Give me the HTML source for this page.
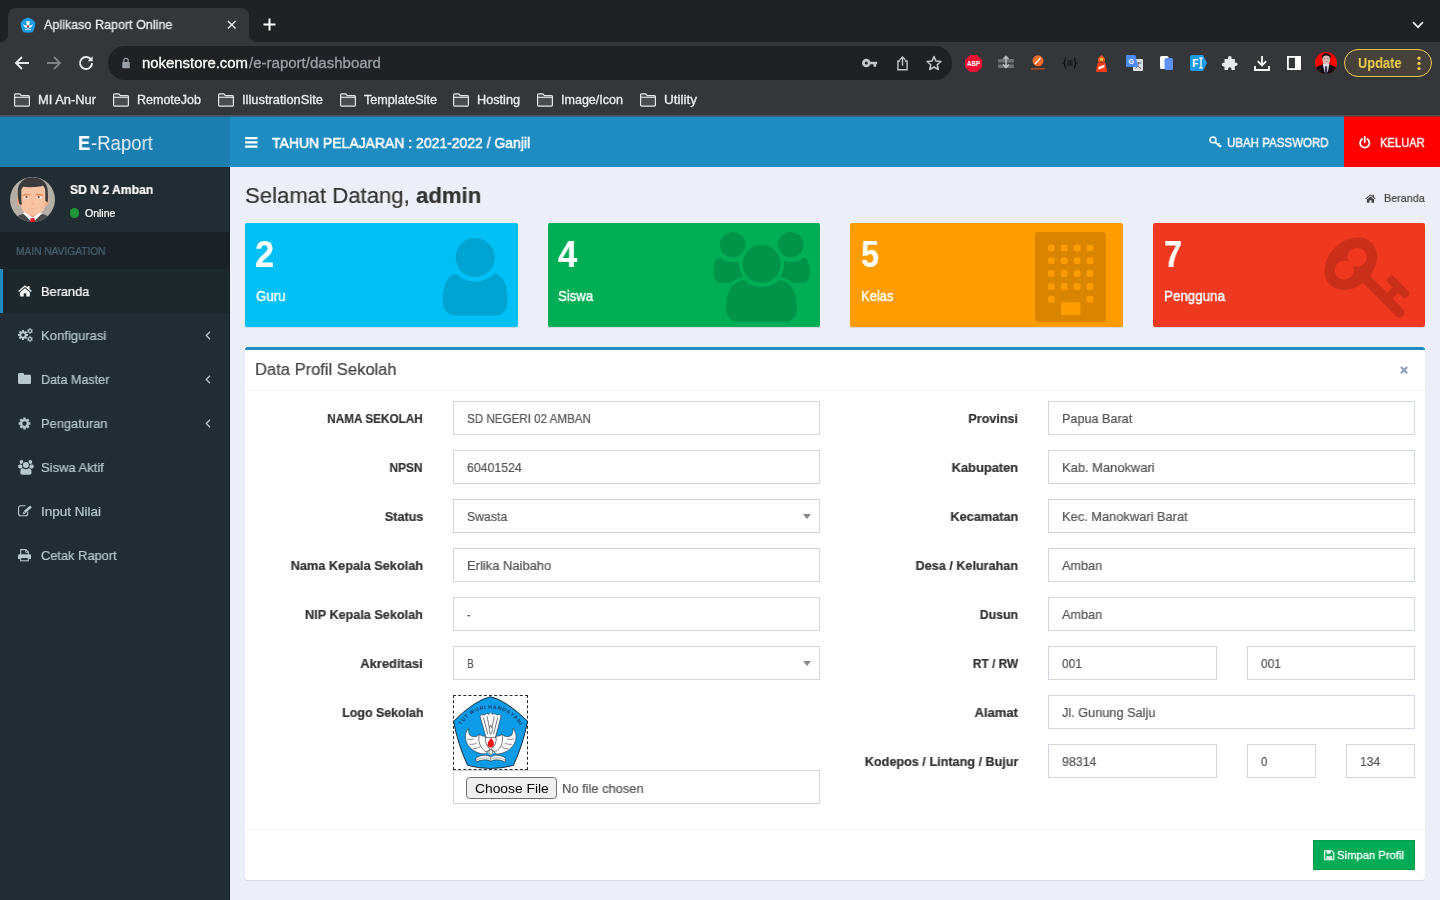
<!DOCTYPE html>
<html lang="id">
<head>
<meta charset="utf-8">
<title>Aplikaso Raport Online</title>
<style>
*{box-sizing:border-box;margin:0;padding:0}
html,body{width:1440px;height:900px;overflow:hidden;background:#eceff7;font-family:"Liberation Sans",sans-serif;}
body{position:relative}
.abs{position:absolute}
.t{position:absolute;white-space:nowrap;display:inline-block;will-change:transform}
svg{position:absolute;overflow:visible}
/* browser chrome */
#chrome{position:absolute;left:0;top:0;width:1440px;height:116px;background:#35363a}
#tabstrip{position:absolute;left:0;top:0;width:1440px;height:42px;background:#202124}
#tab{position:absolute;left:8px;top:8px;width:241px;height:34px;background:#35363a;border-radius:8px 8px 0 0}
#tab:before,#tab:after{content:"";position:absolute;bottom:0;width:8px;height:8px;background:radial-gradient(circle at 0 0,transparent 8px,#35363a 8.5px)}
#tab:before{left:-8px}
#tab:after{right:-8px;background:radial-gradient(circle at 100% 0,transparent 8px,#35363a 8.5px)}
#omni{position:absolute;left:108px;top:46.300px;width:844px;height:33.400px;border-radius:16.700px;background:#202124}
#update{position:absolute;left:1344px;top:49px;width:88px;height:28px;border-radius:14px;border:1px solid #f0cc4c;background:#46423a}
/* app */
#logo{position:absolute;left:0;top:116px;width:230px;height:51px;background:#1b7eb0}
#navbar{position:absolute;left:230px;top:116px;width:1210px;height:51px;background:#1e8cc1}
#keluar{position:absolute;left:1344px;top:116px;width:96px;height:51px;background:#ff0000}
#sidebar{position:absolute;left:0;top:167px;width:230px;height:733px;background:#212d33}
#navhead{position:absolute;left:0;top:65px;width:230px;height:37px;background:#1a2227}
#active{position:absolute;left:0;top:102px;width:230px;height:44px;background:#1d282d;border-left:3px solid #1e8cc1}
.sbox{position:absolute;top:223px;width:273px;height:104px;border-radius:2px;box-shadow:0 1px 1px rgba(0,0,0,.1);overflow:hidden}
#box{position:absolute;left:245px;top:347px;width:1180px;height:533px;background:#fff;border-top:3px solid #1e8cc1;border-radius:3px;box-shadow:0 1px 1px rgba(0,0,0,.1)}
.hr{position:absolute;left:0;width:1180px;height:1px;background:#f4f4f4}
.in{position:absolute;height:34px;border:1px solid #d2d6e0;background:#fff}
.caret{position:absolute;width:0;height:0;border-left:4px solid transparent;border-right:4px solid transparent;border-top:5px solid #888}
#save{position:absolute;left:1068px;top:490px;width:102px;height:30px;background:#00ab55;border:1px solid #009a4b;border-radius:0}
#choose{position:absolute;left:12px;top:5.500px;width:91px;height:22px;border:1px solid #6f6f6f;border-radius:3.5px;background:#efefef}
</style>
</head>
<body>

<div id="chrome">
<div id="tabstrip"><div id="tab"></div></div>
<svg style="left:20px;top:17px" width="16" height="16" viewBox="0 0 16 16"><path d="M8 0.6 C10.8 1.2 13.6 3.2 15.5 6 C15.2 9.4 14.2 12.6 12.6 15.2 C9.6 15.8 6.4 15.8 3.4 15.2 C1.8 12.6 .8 9.4 .5 6 C2.4 3.2 5.2 1.2 8 .6Z" fill="#1d9be6"/><path d="M6.2 4.2h3.6l-.8 4.2h-2z" fill="#fff"/><path d="M3.2 7.2c.4 2 1.8 3.4 4 3.6l.8-1.6.8 1.6c2.2-.2 3.6-1.6 4-3.6-1 1-2.2 1.4-3.2 1.2H6.4C5.400 8.6 4.200 8.200 3.200 7.200Z" fill="#fff"/><ellipse cx="8" cy="9.3" rx=".9" ry="1.2" fill="#e8202a"/><path d="M5 12.200l3-.8 3 .8v.9l-3-.7-3 .7z" fill="#fff"/></svg>
<span class="t" style="top:15.20px;font-size:12.8px;line-height:19px;color:#e8eaed;left:44.30px;transform-origin:0 50%;transform:scaleX(0.9806);-webkit-text-stroke:0.3px #e8eaed;">Aplikaso Raport Online</span>
<svg style="left:227px;top:20px" width="9.500" height="9.500" viewBox="0 0 10 10"><path d="M1 1l8 8M9 1l-8 8" stroke="#e8eaed" stroke-width="1.5" fill="none"/></svg>
<svg style="left:263px;top:18px" width="13" height="13" viewBox="0 0 13 13"><path d="M6.500 .5v12M.5 6.500h12" stroke="#fff" stroke-width="2" fill="none"/></svg>
<svg style="left:1412px;top:21px" width="12" height="8" viewBox="0 0 12 8"><path d="M1 1.200l5 5 5-5" stroke="#e8eaed" stroke-width="1.700" fill="none"/></svg>
<svg style="left:14px;top:55px" width="16" height="16" viewBox="0 0 16 16"><path d="M15 8H2.500M8 2L2 8l6 6" stroke="#e8eaed" stroke-width="1.900" fill="none"/></svg>
<svg style="left:46px;top:55px" width="16" height="16" viewBox="0 0 16 16"><path d="M1 8h12.500M8 2l6 6-6 6" stroke="#7e8084" stroke-width="1.900" fill="none"/></svg>
<svg style="left:78px;top:55px" width="16" height="16" viewBox="0 0 16 16"><path d="M13.300 5.200A6 6 0 1 0 14 8" stroke="#e8eaed" stroke-width="1.900" fill="none"/><path d="M14.600 1.200v5h-5z" fill="#e8eaed"/></svg>
<div id="omni"></div>
<svg style="left:121px;top:57px" width="10" height="11.700" viewBox="0 0 12 14"><rect x="1.500" y="6" width="9" height="7.500" rx="1" fill="#9aa0a6"/><path d="M3.500 6V4a2.500 2.500 0 0 1 5 0v2" stroke="#9aa0a6" stroke-width="1.500" fill="none"/></svg>
<span class="t" style="top:53.00px;font-size:14px;line-height:20px;color:#ffffff;left:142.30px;transform-origin:0 50%;transform:scaleX(1.0642);-webkit-text-stroke:0.3px #fff;">nokenstore.com</span>
<span class="t" style="top:53.00px;font-size:14px;line-height:20px;color:#9aa0a6;left:249.00px;transform-origin:0 50%;transform:scaleX(1.0733);-webkit-text-stroke:0.3px #9aa0a6;">/e-raport/dashboard</span>
<svg style="left:862px;top:57px" width="16" height="12" viewBox="0 0 16 12"><circle cx="4.300" cy="6" r="2.900" stroke="#c4c7cb" stroke-width="2.800" fill="none"/><path d="M7.500 6h7.700M12.800 6v3.800" stroke="#c4c7cb" stroke-width="2.600" fill="none"/></svg>
<svg style="left:896.500px;top:55.500px" width="11" height="14.700" viewBox="0 0 12 16"><path d="M3.500 5.500H1v9.500h10V5.500H8.500" stroke="#c4c7cb" stroke-width="1.500" fill="none"/><path d="M6 10.500V1.500M3 4l3-3 3 3" stroke="#c4c7cb" stroke-width="1.500" fill="none"/></svg>
<svg style="left:926px;top:55px" width="16" height="15" viewBox="0 0 16 15"><path d="M8 1.500l2 4.600 4.900.4-3.700 3.200 1.100 4.800L8 12l-4.300 2.500 1.100-4.800L1.100 6.500l4.900-.4z" stroke="#c4c7cb" stroke-width="1.500" fill="none" stroke-linejoin="round"/></svg>
<svg style="left:965px;top:54.5px" width="17" height="17" viewBox="0 0 17 17"><path d="M5 0h7l5 5v7l-5 5H5l-5-5V5z" fill="#f40d32"/><text x="8.500" y="11.300" font-family="Liberation Sans" font-weight="bold" font-size="7.800" fill="#fff" text-anchor="middle" textLength="13" lengthAdjust="spacingAndGlyphs">ABP</text></svg>
<svg style="left:998px;top:56px" width="16" height="14" viewBox="0 0 16 14"><rect x="0" y="3" width="16" height="9" rx="1" fill="#6e6f73"/><rect x="0" y="6.500" width="16" height="2" fill="#3c3d41"/><path d="M8 0v11M5 8.500l3 3 3-3M5.500 3L8 .5 10.500 3" stroke="#b9babd" stroke-width="1.600" fill="none"/></svg>
<svg style="left:1031px;top:55px" width="14" height="16" viewBox="0 0 14 16"><circle cx="7" cy="5.800" r="5.500" fill="#f26b2a"/><path d="M4 9l5.500-6" stroke="#fff" stroke-width="1.300"/><rect x="0" y="13" width="14" height="1.600" fill="#a84a22"/></svg>
<svg style="left:1063px;top:57px" width="14" height="12" viewBox="0 0 14 12"><path d="M3 1C1.500 1 2.500 5.500 .8 6 2.500 6.500 1.500 11 3 11M11 1c1.500 0 .5 4.500 2.200 5-1.700.5-.7 5-2.200 5" stroke="#0c0c0e" stroke-width="1.300" fill="none"/><path d="M4.500 4h5M4.500 6h5M4.500 8h5" stroke="#0c0c0e" stroke-width="1.100"/></svg>
<svg style="left:1095px;top:54.500px" width="13" height="17" viewBox="0 0 13 17"><path d="M6.500 0l3.500 3.500v3.200H3V3.500z" fill="#ff5a1f"/><circle cx="6.500" cy="4.200" r="1.500" fill="#ffd54a"/><path d="M2.800 7.500h7.400l2 9.500H.8z" fill="#ff3d14"/><path d="M3.500 12l6-2.200v2.400l-6 2.200z" fill="#fff"/></svg>
<svg style="left:1125.500px;top:55px" width="17" height="16" viewBox="0 0 17 16"><rect x="7" y="4" width="10" height="12" rx="1" fill="#dcdfe3"/><path d="M9.500 8h6M12.500 7v1c0 2-1.500 4.500-3 5.500M11 9.500c.8 1.800 2.500 3.300 4 4" stroke="#5f6368" stroke-width="1" fill="none"/><path d="M1 0h8.500l2.500 12H1a1 1 0 0 1-1-1V1a1 1 0 0 1 1-1z" fill="#4c8bf5"/><text x="5.200" y="8.700" font-family="Liberation Sans" font-weight="bold" font-size="7" fill="#fff" text-anchor="middle">G</text></svg>
<svg style="left:1159.500px;top:56px" width="13" height="14" viewBox="0 0 13 14"><rect x="0" y="0" width="8.500" height="13" rx="1.500" fill="#fff"/><rect x="4.500" y="2" width="8.500" height="12" rx="1.500" fill="#5b94f5"/></svg>
<svg style="left:1189.500px;top:55px" width="17" height="16" viewBox="0 0 17 16"><path d="M2 0h11l4 8-4 8H2a2 2 0 0 1-2-2V2a2 2 0 0 1 2-2z" fill="#1f9bea"/><text x="5.400" y="12" font-family="Liberation Sans" font-weight="bold" font-size="10" fill="#fff" text-anchor="middle">F</text><path d="M9.300 3.200h3.400M9.300 12.800h3.400M11 3.200v9.600" stroke="#fff" stroke-width="1.300"/></svg>
<svg style="left:1222px;top:55.500px" width="16" height="15" viewBox="0 0 16 15"><path d="M6 1.800a1.800 1.800 0 0 1 3.600 0V3h3.200v3.400h1a1.800 1.800 0 0 1 0 3.600h-1V14H9.500v-1a1.700 1.700 0 0 0-3.400 0v1H2.500v-3.600h-1a1.800 1.800 0 0 1 0-3.600h1V3H6z" fill="#e8eaed"/></svg>
<svg style="left:1254px;top:55px" width="16" height="16" viewBox="0 0 16 16"><path d="M8 1v9M3.800 6.200L8 10.400l4.200-4.200M1 11v4h14v-4" stroke="#fff" stroke-width="1.800" fill="none"/></svg>
<svg style="left:1287px;top:56px" width="14" height="14" viewBox="0 0 14 14"><rect x=".9" y=".9" width="12.200" height="12.200" stroke="#fff" stroke-width="1.800" fill="none"/><rect x="8" y="1" width="5.500" height="12" fill="#fff"/></svg>
<svg style="left:1315px;top:52px;border-radius:50%;overflow:hidden" width="22" height="22" viewBox="0 0 22 22"><g><rect width="22" height="22" fill="#fb0202"/><path d="M0 22V16.500C2 14.500 5 13.500 8 12.300h6.300c3 1.200 6 2.200 7.700 4.200V22z" fill="#0d0d12"/><path d="M7.800 12l1.200-1h4.300l1.100 1-1.500 8h-3.500z" fill="#d9d9e6"/><path d="M10.100 14.200h1.900l.5 7.800h-3z" fill="#3a3450"/><rect x="7.500" y="2.500" width="7.500" height="9.500" rx="3.400" fill="#d9bbb4"/><path d="M6.900 6.300C6.500 2.800 8.500 1.200 11.300 1.200s4.900 1.600 4.500 5.100l-.8-.3c-.2-1.600-1.300-2.600-3.700-2.600s-3.400 1-3.600 2.600z" fill="#15100f"/><path d="M9.200 9.600h3.800" stroke="#b98c88" stroke-width=".7"/><path d="M8.600 6.600h1.500M12.200 6.600h1.500" stroke="#6b5a66" stroke-width=".8"/></g></svg>
<div id="update"></div>
<span class="t" style="top:53.00px;font-size:14.2px;line-height:20px;color:#f3cf4e;font-weight:bold;left:1357.50px;transform-origin:0 50%;transform:scaleX(0.9037);">Update</span>
<svg style="left:1416.500px;top:56px" width="4" height="14" viewBox="0 0 4 14"><circle cx="2" cy="2.200" r="1.600" fill="#f3cf4e"/><circle cx="2" cy="7.400" r="1.600" fill="#f3cf4e"/><circle cx="2" cy="12.500" r="1.600" fill="#f3cf4e"/></svg>
<svg style="left:14px;top:93px" width="16" height="14" viewBox="0 0 16 14"><path d="M1.500 .8h4.300l1.600 1.800h7.100a.9.900 0 0 1 .9.900v8.800a.9.900 0 0 1-.9.900H1.500a.9.900 0 0 1-.9-.9V1.700a.9.900 0 0 1 .9-.9z" fill="#4a4b4f" stroke="#e4e6e9" stroke-width="1.200"/><path d="M.8 4.300h14.400" stroke="#e4e6e9" stroke-width="1.100"/></svg>
<span class="t" style="top:91.00px;font-size:12.4px;line-height:18px;color:#eceef0;left:38.00px;transform-origin:0 50%;transform:scaleX(1.0394);-webkit-text-stroke:0.3px #eceef0;">MI An-Nur</span>
<svg style="left:113px;top:93px" width="16" height="14" viewBox="0 0 16 14"><path d="M1.500 .8h4.300l1.600 1.800h7.100a.9.900 0 0 1 .9.900v8.800a.9.900 0 0 1-.9.900H1.500a.9.900 0 0 1-.9-.9V1.700a.9.900 0 0 1 .9-.9z" fill="#4a4b4f" stroke="#e4e6e9" stroke-width="1.200"/><path d="M.8 4.300h14.400" stroke="#e4e6e9" stroke-width="1.100"/></svg>
<span class="t" style="top:91.00px;font-size:12.4px;line-height:18px;color:#eceef0;left:137.00px;transform-origin:0 50%;transform:scaleX(1.0090);-webkit-text-stroke:0.3px #eceef0;">RemoteJob</span>
<svg style="left:218px;top:93px" width="16" height="14" viewBox="0 0 16 14"><path d="M1.500 .8h4.300l1.600 1.800h7.100a.9.900 0 0 1 .9.900v8.800a.9.900 0 0 1-.9.900H1.500a.9.900 0 0 1-.9-.9V1.700a.9.900 0 0 1 .9-.9z" fill="#4a4b4f" stroke="#e4e6e9" stroke-width="1.200"/><path d="M.8 4.300h14.400" stroke="#e4e6e9" stroke-width="1.100"/></svg>
<span class="t" style="top:91.00px;font-size:12.4px;line-height:18px;color:#eceef0;left:242.00px;transform-origin:0 50%;transform:scaleX(1.0402);-webkit-text-stroke:0.3px #eceef0;">IllustrationSite</span>
<svg style="left:340px;top:93px" width="16" height="14" viewBox="0 0 16 14"><path d="M1.500 .8h4.300l1.600 1.800h7.100a.9.900 0 0 1 .9.900v8.800a.9.900 0 0 1-.9.900H1.500a.9.900 0 0 1-.9-.9V1.700a.9.900 0 0 1 .9-.9z" fill="#4a4b4f" stroke="#e4e6e9" stroke-width="1.200"/><path d="M.8 4.300h14.400" stroke="#e4e6e9" stroke-width="1.100"/></svg>
<span class="t" style="top:91.00px;font-size:12.4px;line-height:18px;color:#eceef0;left:364.00px;transform-origin:0 50%;transform:scaleX(1.0185);-webkit-text-stroke:0.3px #eceef0;">TemplateSite</span>
<svg style="left:453px;top:93px" width="16" height="14" viewBox="0 0 16 14"><path d="M1.500 .8h4.300l1.600 1.800h7.100a.9.900 0 0 1 .9.900v8.800a.9.900 0 0 1-.9.900H1.500a.9.900 0 0 1-.9-.9V1.700a.9.900 0 0 1 .9-.9z" fill="#4a4b4f" stroke="#e4e6e9" stroke-width="1.200"/><path d="M.8 4.300h14.400" stroke="#e4e6e9" stroke-width="1.100"/></svg>
<span class="t" style="top:91.00px;font-size:12.4px;line-height:18px;color:#eceef0;left:477.00px;transform-origin:0 50%;transform:scaleX(1.0229);-webkit-text-stroke:0.3px #eceef0;">Hosting</span>
<svg style="left:537px;top:93px" width="16" height="14" viewBox="0 0 16 14"><path d="M1.500 .8h4.300l1.600 1.800h7.100a.9.900 0 0 1 .9.900v8.800a.9.900 0 0 1-.9.900H1.500a.9.900 0 0 1-.9-.9V1.700a.9.900 0 0 1 .9-.9z" fill="#4a4b4f" stroke="#e4e6e9" stroke-width="1.200"/><path d="M.8 4.300h14.400" stroke="#e4e6e9" stroke-width="1.100"/></svg>
<span class="t" style="top:91.00px;font-size:12.4px;line-height:18px;color:#eceef0;left:561.00px;transform-origin:0 50%;transform:scaleX(1.0111);-webkit-text-stroke:0.3px #eceef0;">Image/Icon</span>
<svg style="left:640px;top:93px" width="16" height="14" viewBox="0 0 16 14"><path d="M1.500 .8h4.300l1.600 1.800h7.100a.9.900 0 0 1 .9.900v8.800a.9.900 0 0 1-.9.900H1.500a.9.900 0 0 1-.9-.9V1.700a.9.900 0 0 1 .9-.9z" fill="#4a4b4f" stroke="#e4e6e9" stroke-width="1.200"/><path d="M.8 4.300h14.400" stroke="#e4e6e9" stroke-width="1.100"/></svg>
<span class="t" style="top:91.00px;font-size:12.4px;line-height:18px;color:#eceef0;left:664.00px;transform-origin:0 50%;transform:scaleX(1.0885);-webkit-text-stroke:0.3px #eceef0;">Utility</span>
<div class="abs" style="left:0;top:115px;width:1440px;height:1px;background:#4d4e52"></div>
</div>
<div id="logo"></div><div id="navbar"></div><div id="keluar"></div>
<div class="abs" style="left:0;top:116px;width:230px;height:1px;background:#2c6080"></div><div class="abs" style="left:230px;top:116px;width:1114px;height:1px;background:#2d6888"></div><div class="abs" style="left:1344px;top:116px;width:96px;height:1px;background:#a82226"></div>
<span class="t" style="top:128.80px;font-size:20.9px;line-height:27px;color:#fff;font-weight:bold;left:77.90px;transform-origin:0 50%;transform:scaleX(0.8706);-webkit-text-stroke:0.22px #fff;">E</span>
<span class="t" style="top:128.80px;font-size:20.9px;line-height:27px;color:#fff;left:91.00px;transform-origin:0 50%;transform:scaleX(0.8881);opacity:.88;-webkit-text-stroke:0;">-Raport</span>
<svg style="left:244.700px;top:136.500px" width="12.500" height="10.800" viewBox="0 0 12.500 10.800"><path d="M0 1.100h12.500M0 5.400h12.500M0 9.700h12.500" stroke="#fff" stroke-width="2.200"/></svg>
<span class="t" style="top:132.70px;font-size:14.9px;line-height:20px;color:#fff;left:272.30px;transform-origin:0 50%;transform:scaleX(0.9376);-webkit-text-stroke:0.5px #fff;">TAHUN PELAJARAN : 2021-2022 / Ganjil</span>
<svg style="left:1209px;top:136.300px" width="13" height="12" viewBox="0 0 14 13"><circle cx="4.200" cy="4.200" r="3.200" stroke="#fff" stroke-width="1.700" fill="none"/><path d="M6.600 6.600l6 5.400M9.800 9.600l1.700-1.700M11.800 11.400l1.400-1.400" stroke="#fff" stroke-width="1.600" fill="none"/></svg>
<span class="t" style="top:132.80px;font-size:13.3px;line-height:19px;color:#fff;left:1226.70px;transform-origin:0 50%;transform:scaleX(0.8666);-webkit-text-stroke:0.4px #fff;">UBAH PASSWORD</span>
<svg style="left:1359.400px;top:135.500px" width="11.500" height="12.400" viewBox="0 0 12 13"><path d="M3.300 3.200A4.900 4.900 0 1 0 8.700 3.200" stroke="#fff" stroke-width="1.900" fill="none" stroke-linecap="round"/><path d="M6 .9v5.600" stroke="#fff" stroke-width="1.900" stroke-linecap="round"/></svg>
<span class="t" style="top:132.80px;font-size:13.3px;line-height:19px;color:#fff;left:1380.00px;transform-origin:0 50%;transform:scaleX(0.8402);-webkit-text-stroke:0.4px #fff;">KELUAR</span>
<div id="sidebar"><div id="navhead"></div><div id="active"></div><div class="abs" style="right:0;top:0;width:1px;height:733px;background:#182126"></div></div>
<svg style="left:10px;top:177px;border-radius:50%;overflow:hidden" width="45" height="45" viewBox="0 0 45 45"><g><rect width="45" height="45" fill="#b4aea5"/>
<path d="M4 45c0-4 3-6.500 9-8l9.600 3 9.600-3c6 1.500 9 4 9 8z" fill="#4b4b4d"/>
<path d="M13 36.300l9.600 9.500 9.600-9.500-3.200-1.800H16.200z" fill="#fff"/>
<path d="M20.600 41.300h3.900l.6 4.500h-5.100z" fill="#ee0f1f"/>
<path d="M16 33l6.600 5.500 6.600-5.500v3l-6.600 4.400L16 36z" fill="#ec9f78"/>
<ellipse cx="9.200" cy="23.800" rx="2.300" ry="5" fill="#f2ab86"/><ellipse cx="36.500" cy="23.800" rx="2.300" ry="5" fill="#f2ab86"/>
<path d="M10.700 6h24.700v20c0 4-1.200 6.500-3 8.500l-6.500 3.200c-2 .8-4.500.8-6.500 0L13.700 34.500c-1.800-2-3-4.500-3-8.500z" fill="#f8c3a3"/>
<path d="M9.600 27.300C8 24 7.600 18 8 11.500 9.500 4.500 15 .2 22.800 .2S36 4.500 37.400 11c.7 5 .8 10 .3 14.500l-2.400-1.700V14c-.2-2.200-1-4-2.300-5.600-1 .7-2.200 1-3.500 1.100-5.500.9-11.500.9-16.300.3-1.300 1.300-1.900 2.800-1.900 4.500v8.500c.2 1.700.6 3.300.4 5z" fill="#3d3c3d"/>
<path d="M12.500 17.900c2.800-1.400 5.800-1.300 8.300-.3l-.2.900c-2.700-.5-5.400-.5-8.100.4zM33.300 17.900c-2.800-1.400-5.800-1.300-8.300-.3l.2.900c2.700-.5 5.400-.5 8.100.4z" fill="#e4895a"/>
<path d="M13.700 20.400c1.800-1.300 3.800-1.300 5.600.2-1.800 1.400-3.800 1.400-5.600-.2zM31.800 20.400c-1.800-1.300-3.800-1.300-5.600.2 1.800 1.400 3.800 1.400 5.600-.2z" fill="#fff"/>
<circle cx="16.500" cy="20.200" r="1.100" fill="#7a4a2a"/><circle cx="28.700" cy="20.200" r="1.100" fill="#7a4a2a"/>
<path d="M21.500 21v5.500c-.7.500-1.200 1-1.200 1.500h4.600c0-.5-.5-1-1.200-1.500" fill="#f3b391" opacity=".7"/>
<path d="M18.500 30.400c2.700.7 5.500.7 8.200 0-1.300 1.300-6.900 1.300-8.200 0z" fill="#e59873"/>
</g></svg>
<span class="t" style="top:179.80px;font-size:13.1px;line-height:19px;color:#fff;font-weight:bold;left:70.00px;transform-origin:0 50%;transform:scaleX(0.9276);-webkit-text-stroke:0.22px #fff;">SD N 2 Amban</span>
<div class="abs" style="left:69.900px;top:208.200px;width:9.600px;height:9.600px;border-radius:50%;background:#1f9639"></div>
<span class="t" style="top:204.75px;font-size:10.5px;line-height:16px;color:#fff;left:84.75px;transform-origin:0 50%;transform:scaleX(0.9969);-webkit-text-stroke:0.22px #fff;">Online</span>
<span class="t" style="top:243.00px;font-size:11.5px;line-height:16px;color:#4b6472;left:15.50px;transform-origin:0 50%;transform:scaleX(0.8849);-webkit-text-stroke:0.22px #4b6472;">MAIN NAVIGATION</span>
<svg style="left:18px;top:285px" width="14" height="12" viewBox="0 0 14 12"><path d="M7 .3L.2 6l.8 1L7 2.100 13 7l.8-1-2.300-1.900V1h-1.700v1.600z" fill="#fff"/><path d="M7 3.300L2.200 7.200V11.500h3.500V8.300h2.600v3.200h3.500V7.200z" fill="#fff"/></svg>
<span class="t" style="top:281.80px;font-size:13.2px;line-height:19px;color:#fff;left:41.30px;transform-origin:0 50%;transform:scaleX(0.9687);-webkit-text-stroke:0.22px #fff;">Beranda</span>
<svg style="left:17px;top:327px" width="17" height="16" viewBox="0 0 17 16"><path fill-rule="evenodd" fill="#b8c7ce" d="M9.54 6.94L11.00 7.01L11.00 8.99L9.54 9.06L9.26 9.76L10.24 10.83L8.83 12.24L7.76 11.26L7.06 11.54L6.99 13.00L5.01 13.00L4.94 11.54L4.24 11.26L3.17 12.24L1.76 10.83L2.74 9.76L2.46 9.06L1.00 8.99L1.00 7.01L2.46 6.94L2.74 6.24L1.76 5.17L3.17 3.76L4.24 4.74L4.94 4.46L5.01 3.00L6.99 3.00L7.06 4.46L7.76 4.74L8.83 3.76L10.24 5.17L9.26 6.24ZM4.25 8.00a1.75 1.75 0 1 0 3.50 0a1.75 1.75 0 1 0 -3.50 0Z"/><path fill-rule="evenodd" fill="#b8c7ce" d="M14.98 4.27L15.85 4.76L15.09 6.09L14.23 5.58L13.76 5.85L13.76 6.85L12.24 6.85L12.24 5.85L11.77 5.58L10.91 6.09L10.15 4.76L11.02 4.27L11.02 3.73L10.15 3.24L10.91 1.91L11.77 2.42L12.24 2.15L12.24 1.15L13.76 1.15L13.76 2.15L14.23 2.42L15.09 1.91L15.85 3.24L14.98 3.73ZM12.05 4.00a0.95 0.95 0 1 0 1.90 0a0.95 0.95 0 1 0 -1.90 0Z"/><path fill-rule="evenodd" fill="#b8c7ce" d="M14.98 12.27L15.85 12.76L15.09 14.09L14.23 13.58L13.76 13.85L13.76 14.85L12.24 14.85L12.24 13.85L11.77 13.58L10.91 14.09L10.15 12.76L11.02 12.27L11.02 11.73L10.15 11.24L10.91 9.91L11.77 10.42L12.24 10.15L12.24 9.15L13.76 9.15L13.76 10.15L14.23 10.42L15.09 9.91L15.85 11.24L14.98 11.73ZM12.05 12.00a0.95 0.95 0 1 0 1.90 0a0.95 0.95 0 1 0 -1.90 0Z"/></svg>
<span class="t" style="top:325.80px;font-size:13.2px;line-height:19px;color:#b8c7ce;left:41.30px;transform-origin:0 50%;transform:scaleX(0.9899);-webkit-text-stroke:0.22px #b8c7ce;">Konfigurasi</span>
<svg style="left:18px;top:373px" width="13" height="11" viewBox="0 0 13 11"><path d="M1.300 0h3.500a1.200 1.200 0 0 1 1.200 1.200v.5h5.700A1.300 1.300 0 0 1 13 3v6.700A1.300 1.300 0 0 1 11.700 11H1.300A1.300 1.300 0 0 1 0 9.700V1.300A1.300 1.300 0 0 1 1.300 0z" fill="#b8c7ce"/></svg>
<span class="t" style="top:369.80px;font-size:13.2px;line-height:19px;color:#b8c7ce;left:41.30px;transform-origin:0 50%;transform:scaleX(0.9517);-webkit-text-stroke:0.22px #b8c7ce;">Data Master</span>
<svg style="left:17.500px;top:416.5px" width="13" height="13" viewBox="0 0 13 13"><path fill-rule="evenodd" fill="#b8c7ce" d="M10.81 5.21L12.38 5.33L12.38 7.67L10.81 7.79L10.46 8.64L11.49 9.83L9.83 11.49L8.64 10.46L7.79 10.81L7.67 12.38L5.33 12.38L5.21 10.81L4.36 10.46L3.17 11.49L1.51 9.83L2.54 8.64L2.19 7.79L0.62 7.67L0.62 5.33L2.19 5.21L2.54 4.36L1.51 3.17L3.17 1.51L4.36 2.54L5.21 2.19L5.33 0.62L7.67 0.62L7.79 2.19L8.64 2.54L9.83 1.51L11.49 3.17L10.46 4.36ZM4.30 6.50a2.20 2.20 0 1 0 4.40 0a2.20 2.20 0 1 0 -4.40 0Z"/></svg>
<span class="t" style="top:413.80px;font-size:13.2px;line-height:19px;color:#b8c7ce;left:41.30px;transform-origin:0 50%;transform:scaleX(0.9744);-webkit-text-stroke:0.22px #b8c7ce;">Pengaturan</span>
<svg style="left:17.700px;top:459.6px" width="15.800" height="15" viewBox="0 0 15.800 15"><circle cx="3.500" cy="1.950" r="1.950" fill="#b8c7ce"/><circle cx="12.300" cy="1.950" r="1.950" fill="#b8c7ce"/><rect x=".1" y="4.400" width="4.400" height="4" rx="1.700" fill="#b8c7ce"/><rect x="11.300" y="4.400" width="4.400" height="4" rx="1.700" fill="#b8c7ce"/><circle cx="7.900" cy="5" r="3.650" fill="#212d33"/><circle cx="7.900" cy="5" r="2.950" fill="#b8c7ce"/><path d="M2.300 13V11.400C2.300 9.300 3.600 8.300 5 8.300c.8.700 1.800 1.050 2.900 1.050s2.100-.350 2.900-1.050c1.400 0 2.700 1 2.700 3.100V13c0 1-.8 1.700-1.800 1.700H4.100c-1 0-1.800-.7-1.800-1.700z" fill="#b8c7ce"/></svg>
<span class="t" style="top:457.80px;font-size:13.2px;line-height:19px;color:#b8c7ce;left:41.30px;transform-origin:0 50%;transform:scaleX(0.9856);-webkit-text-stroke:0.22px #b8c7ce;">Siswa Aktif</span>
<svg style="left:18px;top:504.8px" width="14.500" height="11.500" viewBox="0 0 14.500 11.500"><path d="M9.700 6.800v2a2 2 0 0 1-2 2H2.600a2 2 0 0 1-2-2V2.800a2 2 0 0 1 2-2H7.500" stroke="#b8c7ce" stroke-width="1.100" fill="none"/><path d="M6.700 7.100L12.900 1.500" stroke="#b8c7ce" stroke-width="2.700" fill="none"/><path d="M4.700 9.300l.8-2.900 2.100 2.100z" fill="#b8c7ce"/></svg>
<span class="t" style="top:501.80px;font-size:13.2px;line-height:19px;color:#b8c7ce;left:41.30px;transform-origin:0 50%;transform:scaleX(1.0226);-webkit-text-stroke:0.22px #b8c7ce;">Input Nilai</span>
<svg style="left:18px;top:548.8px" width="13" height="12.400" viewBox="0 0 13 12.400"><path d="M2.650 5.500V.6h5.300l2.400 2.400v2.500" stroke="#b8c7ce" stroke-width="1.100" fill="none"/><path d="M7.700 .8v2.500h2.500" stroke="#b8c7ce" stroke-width=".9" fill="none"/><path d="M1.300 5.200h10.400a1.300 1.300 0 0 1 1.300 1.300v3.600h-2.300V8.300H2.300v1.800H0V6.500a1.300 1.300 0 0 1 1.300-1.300z" fill="#b8c7ce"/><rect x="2.650" y="8.500" width="7.700" height="3.300" stroke="#b8c7ce" stroke-width="1.100" fill="none"/></svg>
<span class="t" style="top:545.80px;font-size:13.2px;line-height:19px;color:#b8c7ce;left:41.30px;transform-origin:0 50%;transform:scaleX(0.9737);-webkit-text-stroke:0.22px #b8c7ce;">Cetak Raport</span>
<svg style="left:205px;top:330.5px" width="6" height="9" viewBox="0 0 6 9"><path d="M5 .8L1.300 4.500 5 8.200" stroke="#b8c7ce" stroke-width="1.300" fill="none"/></svg>
<svg style="left:205px;top:374.5px" width="6" height="9" viewBox="0 0 6 9"><path d="M5 .8L1.300 4.500 5 8.200" stroke="#b8c7ce" stroke-width="1.300" fill="none"/></svg>
<svg style="left:205px;top:418.5px" width="6" height="9" viewBox="0 0 6 9"><path d="M5 .8L1.300 4.500 5 8.200" stroke="#b8c7ce" stroke-width="1.300" fill="none"/></svg>
<span class="t" style="top:180.00px;font-size:22.8px;line-height:30px;color:#333;left:245.40px;transform-origin:0 50%;transform:scaleX(0.9702);-webkit-text-stroke:0.22px #333;">Selamat Datang,</span>
<span class="t" style="top:180.00px;font-size:22.8px;line-height:30px;color:#333;font-weight:bold;left:416.40px;transform-origin:0 50%;transform:scaleX(0.9725);-webkit-text-stroke:0.22px #333;">admin</span>
<svg style="left:1364.500px;top:193.500px" width="11" height="9" viewBox="0 0 14 12"><path d="M7 .3L.2 6l.8 1L7 2.100 13 7l.8-1-2.300-1.900V1h-1.700v1.600z" fill="#444"/><path d="M7 3.300L2.200 7.200V11.500h3.500V8.300h2.600v3.200h3.500V7.200z" fill="#444"/></svg>
<span class="t" style="top:190.00px;font-size:11.3px;line-height:16px;color:#444;left:1383.60px;transform-origin:0 50%;transform:scaleX(0.9539);-webkit-text-stroke:0.22px #444;">Beranda</span>
<div class="sbox" style="left:245px;width:273px;background:#00c0f6"></div>
<span class="t" style="top:231.80px;font-size:36.4px;line-height:45px;color:#fff;font-weight:bold;left:255.20px;transform-origin:0 50%;transform:scaleX(0.9405);-webkit-text-stroke:0.22px #fff;">2</span>
<span class="t" style="top:285.80px;font-size:14.1px;line-height:20px;color:#fff;left:255.50px;transform-origin:0 50%;transform:scaleX(0.9403);-webkit-text-stroke:0.4px #fff;">Guru</span>
<div class="sbox" style="left:548px;width:272px;background:#00ae55"></div>
<span class="t" style="top:231.80px;font-size:36.4px;line-height:45px;color:#fff;font-weight:bold;left:557.80px;transform-origin:0 50%;transform:scaleX(0.9455);-webkit-text-stroke:0.22px #fff;">4</span>
<span class="t" style="top:285.80px;font-size:14.1px;line-height:20px;color:#fff;left:558.00px;transform-origin:0 50%;transform:scaleX(0.9350);-webkit-text-stroke:0.4px #fff;">Siswa</span>
<div class="sbox" style="left:850px;width:273px;background:#ff9d00"></div>
<span class="t" style="top:231.80px;font-size:36.4px;line-height:45px;color:#fff;font-weight:bold;left:860.80px;transform-origin:0 50%;transform:scaleX(0.8910);-webkit-text-stroke:0.22px #fff;">5</span>
<span class="t" style="top:285.80px;font-size:14.1px;line-height:20px;color:#fff;left:861.00px;transform-origin:0 50%;transform:scaleX(0.9191);-webkit-text-stroke:0.4px #fff;">Kelas</span>
<div class="sbox" style="left:1153px;width:272px;background:#ee381f"></div>
<span class="t" style="top:231.80px;font-size:36.4px;line-height:45px;color:#fff;font-weight:bold;left:1163.80px;transform-origin:0 50%;transform:scaleX(0.8910);-webkit-text-stroke:0.22px #fff;">7</span>
<span class="t" style="top:285.80px;font-size:14.1px;line-height:20px;color:#fff;left:1163.60px;transform-origin:0 50%;transform:scaleX(0.9477);-webkit-text-stroke:0.4px #fff;">Pengguna</span>
<svg style="left:443px;top:237px" width="66" height="80" viewBox="0 0 66 80"><circle cx="32.200" cy="20.500" r="19.600" fill="#00a3d1"/><path d="M0 64C0 48 4 38 13 36.500c5 5.500 12 8 19.200 8s14.200-2.500 19.200-8C60.400 38 64.600 48 64.600 64c0 9-5 14.500-12 14.500H12c-7 0-12-5.500-12-14.500z" fill="#00a3d1"/></svg>
<svg style="left:710px;top:228px" width="104" height="98" viewBox="710 228 104 98">
<g fill="#009448"><circle cx="732.700" cy="244.600" r="12.700"/><circle cx="790.700" cy="244.600" r="12.700"/>
<path d="M713.600 272c0-8 1.500-13 5.500-14.300 4 2.800 8.500 4.300 13.600 4.300 3 0 6.300-.6 9.500-1.800-1.500 8 0 15.500 4 21-4 .5-8.500 1-11 1.800h-14c-4.500 0-7.600-3.500-7.600-11z"/>
<path d="M809.800 272c0-8-1.500-13-5.500-14.300-4 2.800-8.500 4.300-13.600 4.300-3 0-6.300-.6-9.500-1.800 1.500 8 0 15.500-4 21 4 .5 8.500 1 11 1.800h14c4.500 0 7.600-3.500 7.600-11z"/></g>
<circle cx="761.600" cy="264" r="22.600" fill="#00ae55"/>
<path d="M726.300 308c0-14 3.500-26 17.500-28 5 4.500 11 7 17.800 7s12.800-2.500 17.800-7c14 2 17.500 14 17.500 28 0 9-5 14-13 14h-44.600c-8 0-13-5-13-14z" fill="#009448" stroke="#00ae55" stroke-width="6" paint-order="stroke"/>
<circle cx="761.600" cy="264" r="19" fill="#009448"/>
</svg>
<svg style="left:1035px;top:232px" width="71" height="90" viewBox="1035 232 71 90"><rect x="1035" y="232" width="71" height="90" rx="3.500" fill="#d98500"/><g fill="#ff9d00"><rect x="1048.05" y="244.65" width="6.500" height="6.500" rx="1.600"/><rect x="1060.95" y="244.65" width="6.500" height="6.500" rx="1.600"/><rect x="1073.85" y="244.65" width="6.500" height="6.500" rx="1.600"/><rect x="1086.75" y="244.65" width="6.500" height="6.500" rx="1.600"/><rect x="1048.05" y="257.45" width="6.500" height="6.500" rx="1.600"/><rect x="1060.95" y="257.45" width="6.500" height="6.500" rx="1.600"/><rect x="1073.85" y="257.45" width="6.500" height="6.500" rx="1.600"/><rect x="1086.75" y="257.45" width="6.500" height="6.500" rx="1.600"/><rect x="1048.05" y="270.25" width="6.500" height="6.500" rx="1.600"/><rect x="1060.95" y="270.25" width="6.500" height="6.500" rx="1.600"/><rect x="1073.85" y="270.25" width="6.500" height="6.500" rx="1.600"/><rect x="1086.75" y="270.25" width="6.500" height="6.500" rx="1.600"/><rect x="1048.05" y="283.25" width="6.500" height="6.500" rx="1.600"/><rect x="1060.95" y="283.25" width="6.500" height="6.500" rx="1.600"/><rect x="1073.85" y="283.25" width="6.500" height="6.500" rx="1.600"/><rect x="1086.75" y="283.25" width="6.500" height="6.500" rx="1.600"/><rect x="1048.05" y="296.05" width="6.500" height="6.500" rx="1.600"/><rect x="1086.75" y="296.05" width="6.500" height="6.500" rx="1.600"/><rect x="1061" y="302.300" width="19.400" height="13" rx="1.300"/></g></svg>
<svg style="left:1320px;top:232px" width="100" height="92" viewBox="1320 232 100 92"><g transform="translate(1350.700 263.700) rotate(45)" fill="#ca2f1a">
<ellipse cx="0" cy="0" rx="22.500" ry="29.500"/>
<path d="M15-5h54a5 5 0 0 1 0 10H15z"/>
<rect x="46.500" y="-16" width="7.500" height="12"/>
<rect x="36.500" y="-21.300" width="26.500" height="8.300" rx="2.300"/>
<circle cx="0" cy="-9" r="9.600" fill="#ee381f"/><circle cx="0" cy="9" r="9.600" fill="#ee381f"/>
</g></svg>
<div id="box"><div class="hr" style="top:40px"></div><div class="hr" style="top:479px"></div>
<div class="in" style="left:208px;top:51px;width:367px;"></div>
<div class="in" style="left:208px;top:100px;width:367px;"></div>
<div class="in" style="left:208px;top:149px;width:367px;"></div>
<div class="in" style="left:208px;top:198px;width:367px;"></div>
<div class="in" style="left:208px;top:247px;width:367px;"></div>
<div class="in" style="left:208px;top:296px;width:367px;"></div>
<div class="caret" style="left:558px;top:163.70000000000005px"></div><div class="caret" style="left:558px;top:310.70000000000005px"></div>
<div class="in" style="left:803px;top:51px;width:367px;"></div>
<div class="in" style="left:803px;top:100px;width:367px;"></div>
<div class="in" style="left:803px;top:149px;width:367px;"></div>
<div class="in" style="left:803px;top:198px;width:367px;"></div>
<div class="in" style="left:803px;top:247px;width:367px;"></div>
<div class="in" style="left:803px;top:296px;width:169px;"></div>
<div class="in" style="left:1002px;top:296px;width:168px;"></div>
<div class="in" style="left:803px;top:345px;width:367px;"></div>
<div class="in" style="left:803px;top:394px;width:169px;"></div>
<div class="in" style="left:1002px;top:394px;width:69px;"></div>
<div class="in" style="left:1101px;top:394px;width:69px;"></div>
<div class="abs" style="left:208px;top:345px;width:75px;height:75px;border:1px dashed #2a2a2a"></div>
<div class="in" style="left:208px;top:420px;width:367px"><div id="choose"></div></div>
<div id="save"></div>
</div>
<svg style="left:450px;top:692px" width="81" height="81" viewBox="0 0 900 900">
<path d="M450 52Q624 91 862 325Q817 570 705 815Q450 885 195 815Q83 570 40 325Q276 91 450 52Z" fill="#0c9ce8" stroke="#1a1c22" stroke-width="10" stroke-linejoin="round"/>
<g font-family="Liberation Sans" font-weight="bold" font-size="58" fill="#1d3f73"><text x="134.1" y="354.2" transform="rotate(-56.2 134.1 354.2)" text-anchor="middle">T</text><text x="162.6" y="316.7" transform="rotate(-49.1 162.6 316.7)" text-anchor="middle">U</text><text x="195.5" y="283.1" transform="rotate(-42.0 195.5 283.1)" text-anchor="middle">T</text><text x="255.5" y="238.9" transform="rotate(-30.8 255.5 238.9)" text-anchor="middle">W</text><text x="308.2" y="212.8" transform="rotate(-21.9 308.2 212.8)" text-anchor="middle">U</text><text x="356.7" y="196.9" transform="rotate(-14.2 356.7 196.9)" text-anchor="middle">R</text><text x="391.3" y="189.9" transform="rotate(-8.9 391.3 189.9)" text-anchor="middle">I</text><text x="446.0" y="185.3" transform="rotate(-0.6 446.0 185.3)" text-anchor="middle">H</text><text x="497.0" y="188.2" transform="rotate(7.1 497.0 188.2)" text-anchor="middle">A</text><text x="547.0" y="197.9" transform="rotate(14.8 547.0 197.9)" text-anchor="middle">N</text><text x="595.4" y="214.2" transform="rotate(22.5 595.4 214.2)" text-anchor="middle">D</text><text x="641.1" y="236.8" transform="rotate(30.2 641.1 236.8)" text-anchor="middle">A</text><text x="681.8" y="264.2" transform="rotate(37.6 681.8 264.2)" text-anchor="middle">Y</text><text x="718.7" y="296.6" transform="rotate(45.0 718.7 296.6)" text-anchor="middle">A</text><text x="752.2" y="335.0" transform="rotate(52.7 752.2 335.0)" text-anchor="middle">N</text><text x="772.3" y="364.0" transform="rotate(58.0 772.3 364.0)" text-anchor="middle">I</text></g>
<path d="M398 500H507L530 640L453 705L376 640Z" fill="#fff"/>
<g fill="#fff" stroke="#2b2f38" stroke-width="7" stroke-linejoin="round">
<path d="M205 405C150 470 165 560 225 620C270 665 330 690 395 688L440 640L330 470C300 500 255 505 220 480C208 455 205 430 205 405Z"/>
<path d="M700 405C755 470 740 560 680 620C635 665 575 690 510 688L465 640L575 470C605 500 650 505 685 480C697 455 700 430 700 405Z"/>
<path d="M333 268C340 250 365 245 380 258C390 238 420 236 432 250C440 222 462 222 470 250C482 236 512 238 522 258C537 245 562 250 568 268L505 505H400Z"/>
<path d="M330 470C305 540 330 620 400 665L450 640C400 600 385 540 395 490C375 495 350 490 330 470Z"/>
<path d="M575 470C600 540 575 620 505 665L455 640C505 600 520 540 510 490C530 495 555 490 575 470Z"/>
<path d="M452 368C475 400 475 440 452 470C430 440 430 400 452 368Z"/>
<path d="M453 632C478 655 478 685 453 704C428 685 428 655 453 632Z"/>
<path d="M453 722C410 690 340 700 287 735L290 780C345 750 410 745 453 770C496 745 561 750 616 780L619 735C566 700 496 690 453 722Z"/>
</g>
<path d="M372 285L420 470M412 270L438 400M492 270L466 400M530 285L484 470" stroke="#2b2f38" stroke-width="7" fill="none"/>
<path d="M190 520C215 530 245 530 270 520M215 580C245 585 270 580 295 568M255 630C285 630 310 622 335 608M715 520C690 530 660 530 635 520M690 580C660 585 635 580 610 568M650 630C620 630 595 622 570 608" stroke="#2b2f38" stroke-width="6" fill="none"/>
<path d="M290 758C345 728 410 724 453 748C496 724 561 728 616 758M453 722V770" stroke="#2b2f38" stroke-width="4" fill="none"/>
<path d="M458 512C492 550 494 585 480 602A34 34 0 0 1 424 602C410 585 420 550 458 512Z" fill="#ee1111"/>
</svg>
<span class="t" style="top:778.60px;font-size:13.33px;line-height:19px;color:#000;left:474.60px;transform-origin:0 50%;transform:scaleX(1.0363);-webkit-text-stroke:0;">Choose File</span>
<span class="t" style="top:778.60px;font-size:13px;line-height:19px;color:#555;left:561.70px;transform-origin:0 50%;transform:scaleX(0.9896);-webkit-text-stroke:0.22px #555;">No file chosen</span>
<span class="t" style="top:358.00px;font-size:17px;line-height:23px;color:#444;left:255.40px;transform-origin:0 50%;transform:scaleX(0.9731);-webkit-text-stroke:0.22px #444;">Data Profil Sekolah</span>
<svg style="left:1400px;top:365.900px" width="8.200" height="8.200" viewBox="0 0 8.200 8.200"><path d="M1 1l6.200 6.200M7.200 1L1 7.200" stroke="#949ebc" stroke-width="2.300"/></svg>
<span class="t" style="top:409.25px;font-size:13.5px;line-height:19px;color:#333;font-weight:bold;right:1017.00px;transform-origin:100% 50%;transform:scaleX(0.8701);-webkit-text-stroke:0.22px #333;">NAMA SEKOLAH</span>
<span class="t" style="top:458.25px;font-size:13.5px;line-height:19px;color:#333;font-weight:bold;right:1017.02px;transform-origin:100% 50%;transform:scaleX(0.8793);-webkit-text-stroke:0.22px #333;">NPSN</span>
<span class="t" style="top:507.25px;font-size:13.2px;line-height:19px;color:#333;font-weight:bold;right:1016.98px;transform-origin:100% 50%;transform:scaleX(0.9547);-webkit-text-stroke:0.22px #333;">Status</span>
<span class="t" style="top:556.25px;font-size:13.2px;line-height:19px;color:#333;font-weight:bold;right:1017.02px;transform-origin:100% 50%;transform:scaleX(0.9656);-webkit-text-stroke:0.22px #333;">Nama Kepala Sekolah</span>
<span class="t" style="top:605.25px;font-size:13.2px;line-height:19px;color:#333;font-weight:bold;right:1017.01px;transform-origin:100% 50%;transform:scaleX(0.9592);-webkit-text-stroke:0.22px #333;">NIP Kepala Sekolah</span>
<span class="t" style="top:654.25px;font-size:13.2px;line-height:19px;color:#333;font-weight:bold;right:1016.99px;transform-origin:100% 50%;transform:scaleX(0.9793);-webkit-text-stroke:0.22px #333;">Akreditasi</span>
<span class="t" style="top:703.25px;font-size:13.2px;line-height:19px;color:#333;font-weight:bold;right:1016.98px;transform-origin:100% 50%;transform:scaleX(0.9390);-webkit-text-stroke:0.22px #333;">Logo Sekolah</span>
<span class="t" style="top:409.25px;font-size:13.2px;line-height:19px;color:#333;font-weight:bold;right:421.99px;transform-origin:100% 50%;transform:scaleX(0.9554);-webkit-text-stroke:0.22px #333;">Provinsi</span>
<span class="t" style="top:458.25px;font-size:13.2px;line-height:19px;color:#333;font-weight:bold;right:421.97px;transform-origin:100% 50%;transform:scaleX(0.9754);-webkit-text-stroke:0.22px #333;">Kabupaten</span>
<span class="t" style="top:507.25px;font-size:13.2px;line-height:19px;color:#333;font-weight:bold;right:421.99px;transform-origin:100% 50%;transform:scaleX(0.9656);-webkit-text-stroke:0.22px #333;">Kecamatan</span>
<span class="t" style="top:556.25px;font-size:13.2px;line-height:19px;color:#333;font-weight:bold;right:422.01px;transform-origin:100% 50%;transform:scaleX(0.9569);-webkit-text-stroke:0.22px #333;">Desa / Kelurahan</span>
<span class="t" style="top:605.25px;font-size:13.2px;line-height:19px;color:#333;font-weight:bold;right:421.99px;transform-origin:100% 50%;transform:scaleX(0.9317);-webkit-text-stroke:0.22px #333;">Dusun</span>
<span class="t" style="top:654.25px;font-size:13.2px;line-height:19px;color:#333;font-weight:bold;right:422.01px;transform-origin:100% 50%;transform:scaleX(0.9035);-webkit-text-stroke:0.22px #333;">RT / RW</span>
<span class="t" style="top:703.25px;font-size:13.2px;line-height:19px;color:#333;font-weight:bold;right:422.01px;transform-origin:100% 50%;transform:scaleX(0.9881);-webkit-text-stroke:0.22px #333;">Alamat</span>
<span class="t" style="top:752.25px;font-size:13.2px;line-height:19px;color:#333;font-weight:bold;right:421.99px;transform-origin:100% 50%;transform:scaleX(0.9575);-webkit-text-stroke:0.22px #333;">Kodepos / Lintang / Bujur</span>
<span class="t" style="top:409.25px;font-size:13.5px;line-height:19px;color:#555;left:466.85px;transform-origin:0 50%;transform:scaleX(0.8608);-webkit-text-stroke:0.22px #555;">SD NEGERI 02 AMBAN</span>
<span class="t" style="top:458.25px;font-size:13.5px;line-height:19px;color:#555;left:466.85px;transform-origin:0 50%;transform:scaleX(0.9114);-webkit-text-stroke:0.22px #555;">60401524</span>
<span class="t" style="top:507.25px;font-size:13.2px;line-height:19px;color:#555;left:466.85px;transform-origin:0 50%;transform:scaleX(0.9282);-webkit-text-stroke:0.22px #555;">Swasta</span>
<span class="t" style="top:556.25px;font-size:13.2px;line-height:19px;color:#555;left:466.85px;transform-origin:0 50%;transform:scaleX(0.9812);-webkit-text-stroke:0.22px #555;">Erlika Naibaho</span>
<span class="t" style="top:605.25px;font-size:13.2px;line-height:19px;color:#555;left:466.85px;transform-origin:0 50%;transform:scaleX(0.7915);-webkit-text-stroke:0.22px #555;">-</span>
<span class="t" style="top:654.25px;font-size:13.5px;line-height:19px;color:#555;left:466.85px;transform-origin:0 50%;transform:scaleX(0.7519);-webkit-text-stroke:0.22px #555;">B</span>
<span class="t" style="top:409.25px;font-size:13.2px;line-height:19px;color:#555;left:1061.75px;transform-origin:0 50%;transform:scaleX(0.9572);-webkit-text-stroke:0.22px #555;">Papua Barat</span>
<span class="t" style="top:458.25px;font-size:13.2px;line-height:19px;color:#555;left:1061.75px;transform-origin:0 50%;transform:scaleX(0.9800);-webkit-text-stroke:0.22px #555;">Kab. Manokwari</span>
<span class="t" style="top:507.25px;font-size:13.2px;line-height:19px;color:#555;left:1061.75px;transform-origin:0 50%;transform:scaleX(0.9741);-webkit-text-stroke:0.22px #555;">Kec. Manokwari Barat</span>
<span class="t" style="top:556.25px;font-size:13.2px;line-height:19px;color:#555;left:1061.75px;transform-origin:0 50%;transform:scaleX(0.9619);-webkit-text-stroke:0.22px #555;">Amban</span>
<span class="t" style="top:605.25px;font-size:13.2px;line-height:19px;color:#555;left:1061.75px;transform-origin:0 50%;transform:scaleX(0.9619);-webkit-text-stroke:0.22px #555;">Amban</span>
<span class="t" style="top:654.25px;font-size:13.5px;line-height:19px;color:#555;left:1061.75px;transform-origin:0 50%;transform:scaleX(0.8871);-webkit-text-stroke:0.22px #555;">001</span>
<span class="t" style="top:654.25px;font-size:13.5px;line-height:19px;color:#555;left:1260.75px;transform-origin:0 50%;transform:scaleX(0.8871);-webkit-text-stroke:0.22px #555;">001</span>
<span class="t" style="top:703.25px;font-size:13.2px;line-height:19px;color:#555;left:1062.00px;transform-origin:0 50%;transform:scaleX(0.9650);-webkit-text-stroke:0.22px #555;">Jl. Gunung Salju</span>
<span class="t" style="top:752.25px;font-size:13.5px;line-height:19px;color:#555;left:1061.75px;transform-origin:0 50%;transform:scaleX(0.9193);-webkit-text-stroke:0.22px #555;">98314</span>
<span class="t" style="top:752.25px;font-size:13.5px;line-height:19px;color:#555;left:1260.75px;transform-origin:0 50%;transform:scaleX(0.8542);-webkit-text-stroke:0.22px #555;">0</span>
<span class="t" style="top:752.25px;font-size:13.5px;line-height:19px;color:#555;left:1360.00px;transform-origin:0 50%;transform:scaleX(0.8960);-webkit-text-stroke:0.22px #555;">134</span>
<svg style="left:1323.700px;top:849.500px" width="10.500" height="10.500" viewBox="0 0 12 12"><path d="M.8 .8h8L11.200 3.200v8H.8z" stroke="#fff" stroke-width="1.300" fill="none"/><rect x="3" y="1" width="4.600" height="3.200" fill="#fff"/><rect x="2.600" y="7" width="6.800" height="4" fill="#d9f2e4"/></svg>
<span class="t" style="top:846.75px;font-size:11.4px;line-height:16px;color:#fff;left:1336.80px;transform-origin:0 50%;transform:scaleX(0.9886);-webkit-text-stroke:0.3px #fff;">Simpan Profil</span>
</body></html>
